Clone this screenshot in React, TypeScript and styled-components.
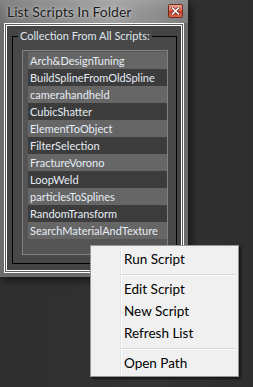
import React from 'react'
import styled, { createGlobalStyle } from 'styled-components'

const scripts = [
  'Arch&DesignTuning',
  'BuildSplineFromOldSpline',
  'camerahandheld',
  'CubicShatter',
  'ElementToObject',
  'FilterSelection',
  'FractureVorono',
  'LoopWeld',
  'particlesToSplines',
  'RandomTransform',
  'SearchMaterialAndTexture',
]

type MenuEntry = { label: string } | { separator: true }

const menu: MenuEntry[] = [
  { label: 'Run Script' },
  { separator: true },
  { label: 'Edit Script' },
  { label: 'New Script' },
  { label: 'Refresh List' },
  { separator: true },
  { label: 'Open Path' },
]

const GlobalStyle = createGlobalStyle`
  html, body {
    margin: 0;
    padding: 0;
    background: #303030;
  }
  * { box-sizing: border-box; }
`

const Desktop = styled.div`
  position: relative;
  width: 253px;
  height: 387px;
  overflow: hidden;
  background: linear-gradient(to right, #2f2f2f, #333 60%, #2e2e2e);
  font-family: Lato, "Noto Sans", sans-serif;
`

const Window = styled.div`
  width: 188px;
  background: #6c6c6c;
  display: flex;
  flex-direction: column;
  box-shadow: 3px 3px 8px rgba(0, 0, 0, 0.6);
`

const TitleBar = styled.div`
  height: 23px;
  display: flex;
  align-items: center;
  justify-content: space-between;
  padding: 0 5px 1px 7px;
  background:
    linear-gradient(to bottom, rgba(255, 255, 255, 0.12), rgba(255, 255, 255, 0) 60%),
    linear-gradient(to right, #737373 0%, #858585 25%, #9d9d9d 60%, #8c8c8c 85%, #7e7e7e 100%);
`

const Title = styled.span`
  font-size: 14px;
  color: #1c1c1c;
  text-shadow: 0 0 6px rgba(230, 230, 230, 0.9), 0 0 2px rgba(230, 230, 230, 0.7);
  white-space: nowrap;
`

const CloseButton = styled.span`
  width: 15px;
  height: 14px;
  display: flex;
  align-items: center;
  justify-content: center;
  border: 1px solid #6b2c22;
  border-radius: 2px;
  background: linear-gradient(to bottom, #f3a493 0%, #e2654e 45%, #c8412b 55%, #e0644a 100%);
`

const Frame = styled.div`
  margin: 0 4px 4px;
  border: 1px solid #fff;
  padding: 1px;
  background: #5c5c5c;
`

const FrameInner = styled.div`
  border: 1px solid #fff;
  background: #434343;
  padding: 3px 4px 6px 5px;
`

const Group = styled.fieldset`
  margin: 0;
  padding: 7px 8px 8px 9px;
  border: 1px solid #000;
  background: #484848;
  min-width: 0;
`

const GroupLabel = styled.legend`
  margin-left: -4px;
  padding: 0 2px;
  font-size: 11px;
  line-height: 14px;
  color: #dfe6ee;
  background: #484848;
`

const ListBox = styled.div`
  height: 205px;
  border: 1px solid #828282;
  background: #545454;
  padding: 1px 0 0 5px;
`

const Row = styled.div<{ $odd: boolean }>`
  height: 17px;
  line-height: 17px;
  padding-left: 2px;
  font-size: 11px;
  color: #e6edf5;
  white-space: nowrap;
  overflow: hidden;
  background: ${p => (p.$odd ? '#3c3c3c' : '#666666')};
`

const Menu = styled.div`
  position: absolute;
  left: 90px;
  top: 245px;
  width: 149px;
  padding: 2px;
  border: 1px solid #979797;
  background: linear-gradient(
    to right,
    #f0f0f0 0,
    #f0f0f0 29px,
    #e2e3e3 29px,
    #e2e3e3 30px,
    #ffffff 30px,
    #ffffff 31px,
    #f0f0f0 31px
  );
  box-shadow: 2px 2px 2px rgba(0, 0, 0, 0.55);
`

const MenuItem = styled.div`
  height: 22px;
  line-height: 22px;
  padding-left: 31px;
  font-size: 13.5px;
  color: #000;
  white-space: nowrap;
`

const MenuSeparator = styled.div`
  height: 2px;
  margin: 4px 0 2px 28px;
  border-top: 1px solid #d7d7d7;
  border-bottom: 1px solid #fff;
`

const CloseGlyph = () => (
  <svg width="9" height="8" viewBox="0 0 9 8">
    <path d="M1.5 1 L7.5 7 M7.5 1 L1.5 7" stroke="#5a2418" strokeWidth="3" strokeLinecap="square" />
    <path d="M1.5 1 L7.5 7 M7.5 1 L1.5 7" stroke="#ffffff" strokeWidth="1.6" strokeLinecap="square" />
  </svg>
)

const App = () => {
  return (
    <Desktop>
      <GlobalStyle />
      <Window>
        <TitleBar>
          <Title>List Scripts In Folder</Title>
          <CloseButton><CloseGlyph /></CloseButton>
        </TitleBar>
        <Frame>
          <FrameInner>
            <Group>
              <GroupLabel>Collection From All Scripts:</GroupLabel>
              <ListBox>
                {scripts.map((s, i) => (
                  <Row key={s} $odd={i % 2 === 1}>{s}</Row>
                ))}
              </ListBox>
            </Group>
          </FrameInner>
        </Frame>
      </Window>
      <Menu>
        {menu.map((m, i) =>
          'separator' in m
            ? <MenuSeparator key={i} />
            : <MenuItem key={i}>{m.label}</MenuItem>
        )}
      </Menu>
    </Desktop>
  )
}

export default App
